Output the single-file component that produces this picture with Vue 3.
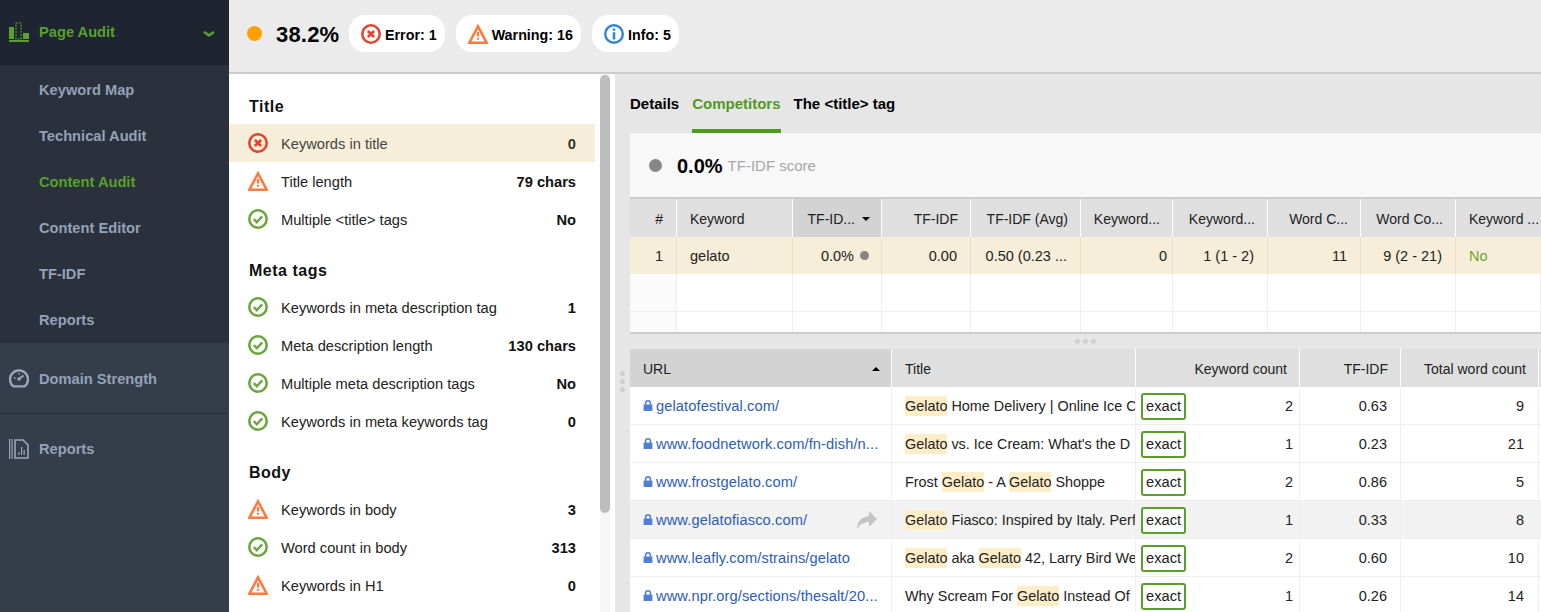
<script setup>
const navSub = [
  { label: 'Keyword Map' },
  { label: 'Technical Audit' },
  { label: 'Content Audit', active: true },
  { label: 'Content Editor' },
  { label: 'TF-IDF' },
  { label: 'Reports' },
]

const sections = [
  {
    title: 'Title',
    rows: [
      { icon: 'err', label: 'Keywords in title', value: '0', selected: true },
      { icon: 'warn', label: 'Title length', value: '79 chars' },
      { icon: 'ok', label: 'Multiple <title> tags', value: 'No' },
    ],
  },
  {
    title: 'Meta tags',
    rows: [
      { icon: 'ok', label: 'Keywords in meta description tag', value: '1' },
      { icon: 'ok', label: 'Meta description length', value: '130 chars' },
      { icon: 'ok', label: 'Multiple meta description tags', value: 'No' },
      { icon: 'ok', label: 'Keywords in meta keywords tag', value: '0' },
    ],
  },
  {
    title: 'Body',
    rows: [
      { icon: 'warn', label: 'Keywords in body', value: '3' },
      { icon: 'ok', label: 'Word count in body', value: '313' },
      { icon: 'warn', label: 'Keywords in H1', value: '0' },
    ],
  },
]

const pages = [
  { url: 'gelatofestival.com/', parts: [['Gelato', 1], [' Home Delivery | Online Ice C', 0]], count: 2, tf: '0.63', total: 9 },
  { url: 'www.foodnetwork.com/fn-dish/n...', parts: [['Gelato', 1], [" vs. Ice Cream: What's the D", 0]], count: 1, tf: '0.23', total: 21 },
  { url: 'www.frostgelato.com/', parts: [['Frost ', 0], ['Gelato', 1], [' - A ', 0], ['Gelato', 1], [' Shoppe', 0]], count: 2, tf: '0.86', total: 5 },
  { url: 'www.gelatofiasco.com/', parts: [['Gelato', 1], [' Fiasco: Inspired by Italy. Perf', 0]], count: 1, tf: '0.33', total: 8, hover: true },
  { url: 'www.leafly.com/strains/gelato', parts: [['Gelato', 1], [' aka ', 0], ['Gelato', 1], [' 42, Larry Bird We', 0]], count: 2, tf: '0.60', total: 10 },
  { url: 'www.npr.org/sections/thesalt/20...', parts: [['Why Scream For ', 0], ['Gelato', 1], [' Instead Of', 0]], count: 1, tf: '0.26', total: 14 },
]
</script>

<template>
  <div class="app">
    <svg class="defs" width="0" height="0" aria-hidden="true">
      <symbol id="i-err" viewBox="0 0 20 20">
        <circle cx="10" cy="10" r="8.7" fill="none" stroke="#e2452f" stroke-width="2.6" />
        <path d="M6.9 6.9l6.2 6.2M13.1 6.9l-6.2 6.2" fill="none" stroke="#e2452f" stroke-width="2.8" />
      </symbol>
      <symbol id="i-warn" viewBox="0 0 20 20">
        <path d="M10 2.4L18.6 18.7H1.4Z" fill="none" stroke="#ff7a3d" stroke-width="2.6" />
        <path d="M10 8v4.6M10 13.8v2" fill="none" stroke="#ff7a3d" stroke-width="2.2" />
      </symbol>
      <symbol id="i-ok" viewBox="0 0 20 20">
        <circle cx="10" cy="10" r="8.7" fill="none" stroke="#6ca63f" stroke-width="2.6" />
        <path d="M5.8 10.2l3 3 5.4-5.8" fill="none" stroke="#6ca63f" stroke-width="2.4" />
      </symbol>
      <symbol id="i-info" viewBox="0 0 20 20">
        <circle cx="10" cy="10" r="8.8" fill="none" stroke="#2f86d8" stroke-width="2.4" />
        <path d="M10 4.4v2.4M10 8.2v7.2" fill="none" stroke="#2f86d8" stroke-width="2.6" />
      </symbol>
      <symbol id="i-lock" viewBox="0 0 10 11">
        <path d="M0.6 4.6h8.8v6.4H0.6z" fill="#4f7fd0" />
        <path d="M2.6 5V3.2a2.4 2.4 0 0 1 4.8 0V5" fill="none" stroke="#4f7fd0" stroke-width="1.5" />
      </symbol>
    </svg>

    <aside class="side">
      <div class="side-head">
        <svg class="side-icon" viewBox="0 0 20 20">
          <path d="M0 5h5v12H0zM14 11h6v6h-6z" fill="#5aa02c" />
          <path d="M7 1h5v16H7z" fill="none" stroke="#5aa02c" stroke-width="1.2" stroke-dasharray="2 1.2" />
          <path d="M0 18h20v2H0z" fill="#5aa02c" />
        </svg>
        <span class="side-head-label">Page Audit</span>
        <svg class="chev" viewBox="0 0 12 6">
          <path d="M1 1l5 3.4L11 1" fill="none" stroke="#5aa02c" stroke-width="2.6" />
        </svg>
      </div>
      <nav class="side-sub">
        <a v-for="item in navSub" :key="item.label" class="sub-item" :class="{ active: item.active }">{{ item.label }}</a>
      </nav>
      <div class="side-main">
        <svg class="side-icon" viewBox="0 0 20 20">
          <path d="M4.4 18.4a9 9 0 1 1 11.2 0z" fill="none" stroke="#98a8bd" stroke-width="2.4" stroke-linejoin="round" />
          <path d="M10 11l4.4-3.6" stroke="#98a8bd" stroke-width="2" />
          <circle cx="10" cy="11" r="1.8" fill="#98a8bd" />
          <path d="M5 10h1.6M10 5v1.6" stroke="#98a8bd" stroke-width="1.4" />
        </svg>
        <span class="side-main-label">Domain Strength</span>
      </div>
      <div class="side-main no-line">
        <svg class="side-icon" viewBox="0 0 20 20">
          <path d="M0.6 0v20" stroke="#98a8bd" stroke-width="1.2" />
          <path d="M3 0v20" stroke="#98a8bd" stroke-width="1.2" />
          <path d="M6 1h8l5 5v13H6z" fill="none" stroke="#98a8bd" stroke-width="1.6" />
          <path d="M10 16v-3M12.6 16V8M15.2 16v-5" stroke="#98a8bd" stroke-width="1.2" />
        </svg>
        <span>Reports</span>
      </div>
    </aside>

    <div class="main">
      <header class="top">
        <span class="top-dot"></span>
        <span class="top-score">38.2%</span>
        <div class="pill">
          <svg class="pill-icon"><use href="#i-err" /></svg><span class="pill-text">Error: 1</span>
        </div>
        <div class="pill">
          <svg class="pill-icon"><use href="#i-warn" /></svg><span class="pill-text">Warning: 16</span>
        </div>
        <div class="pill">
          <svg class="pill-icon"><use href="#i-info" /></svg><span class="pill-text">Info: 5</span>
        </div>
      </header>

      <div class="body">
        <section class="audit">
          <div class="audit-list">
            <div v-for="section in sections" :key="section.title" class="audit-section">
              <h3 class="audit-title">{{ section.title }}</h3>
              <div
                v-for="row in section.rows"
                :key="row.label"
                class="audit-row"
                :class="{ selected: row.selected }"
              >
                <svg class="audit-icon"><use :href="'#i-' + row.icon" /></svg>
                <span class="audit-label">{{ row.label }}</span>
                <span class="audit-value">{{ row.value }}</span>
              </div>
            </div>
          </div>
          <div class="scroll"><div class="scroll-thumb"></div></div>
        </section>

        <section class="detail">
          <div class="handle-v"><i></i><i></i><i></i></div>
          <nav class="tabs">
            <a class="tab">Details</a>
            <a class="tab on">Competitors</a>
            <a class="tab">The &lt;title&gt; tag</a>
          </nav>
          <div class="score">
            <span class="score-dot"></span>
            <span class="score-val">0.0%</span>
            <span class="score-label">TF-IDF score</span>
          </div>

          <div class="kw-table">
            <div class="c h r c-num">#</div>
            <div class="c h">Keyword</div>
            <div class="c h r sorted">TF-ID... <span class="caret down"></span></div>
            <div class="c h r">TF-IDF</div>
            <div class="c h r">TF-IDF (Avg)</div>
            <div class="c h r">Keyword...</div>
            <div class="c h r">Keyword...</div>
            <div class="c h r">Word C...</div>
            <div class="c h r">Word Co...</div>
            <div class="c h last">Keyword ...</div>

            <div class="c y r c-num">1</div>
            <div class="c y">gelato</div>
            <div class="c y r">0.0% <span class="mini-dot"></span></div>
            <div class="c y r">0.00</div>
            <div class="c y r">0.50 (0.23 ...</div>
            <div class="c y r tight">0</div>
            <div class="c y r">1 (1 - 2)</div>
            <div class="c y r">11</div>
            <div class="c y r">9 (2 - 21)</div>
            <div class="c y last green">No</div>

            <template v-for="n in 2" :key="n">
              <div v-for="m in 10" :key="m" class="c e" :class="{ tall: n === 1, short: n === 2, faint: m === 1 }"></div>
            </template>
          </div>

          <div class="handle-h"><i></i><i></i><i></i></div>

          <div class="url-table">
            <div class="c h sorted url-h">URL <span class="caret up"></span></div>
            <div class="c h">Title</div>
            <div class="c h r">Keyword count</div>
            <div class="c h r">TF-IDF</div>
            <div class="c h r">Total word count</div>
            <div class="c h filler"></div>

            <div v-for="p in pages" :key="p.url" class="url-row" :class="{ hover: p.hover }">
              <div class="c b url-c">
                <svg class="lock"><use href="#i-lock" /></svg>
                <a class="link">{{ p.url }}</a>
                <svg v-if="p.hover" class="share" viewBox="0 0 20 20">
                  <path d="M12 1l8 8-8 8v-5C7 12 3 14 0 19c0-7 4-12 12-13z" fill="#c4c4c4" />
                </svg>
              </div>
              <div class="c b title-c">
                <template v-for="(t, i) in p.parts" :key="i">
                  <mark v-if="t[1]" class="hl">{{ t[0] }}</mark>
                  <span v-else>{{ t[0] }}</span>
                </template>
              </div>
              <div class="c b r count-c">
                <span class="exact">exact</span>
                <span>{{ p.count }}</span>
              </div>
              <div class="c b r tf-c">{{ p.tf }}</div>
              <div class="c b r total-c">{{ p.total }}</div>
              <div class="c b filler"></div>
            </div>
          </div>
        </section>
      </div>
    </div>
  </div>
</template>

<style>
html, body { margin: 0; overflow: hidden; }
</style>

<style scoped>
.app {
  display: flex;
  width: 1541px;
  height: 612px;
  overflow: hidden;
  font: 14.67px/20px "Liberation Sans", Arial, sans-serif;
  color: #222;
  background: #fff;
}
.defs { position: absolute; }

/* sidebar */
.side {
  flex: 0 0 229px;
  background: #363d4a;
  font-weight: 700;
  color: #93a2b8;
}
.side-head {
  display: flex;
  align-items: center;
  height: 65px;
  padding: 0 14px 0 9px;
  box-sizing: border-box;
  background: #1e2430;
  border-bottom: 1px solid #1a1f29;
  color: #5aa02c;
}
.side-icon { width: 20px; height: 20px; margin-right: 10px; flex: none; }
.side-head-label { flex: 1; }
.chev { width: 12px; height: 6px; margin-top: 4px; }
.side-sub { background: #2a303c; height: 278px; padding-top: 1px; box-sizing: border-box; }
.sub-item { display: block; height: 46px; line-height: 48px; padding-left: 39px; }
.sub-item.active { color: #5aa02c; }
.side-main {
  display: flex;
  align-items: center;
  height: 71px;
  box-sizing: border-box;
  padding-left: 9px;
  border-bottom: 1px solid #2a303c;
}
.side-main-label { padding-top: 2px; }
.no-line { border-bottom: 0; padding-bottom: 2px; }

/* top bar */
.main { flex: 1; min-width: 0; display: flex; flex-direction: column; }
.top {
  flex: 0 0 74px;
  display: flex;
  align-items: center;
  padding: 0 0 5px 18px;
  box-sizing: border-box;
  background: #ebebeb;
  border-bottom: 2px solid #ccc;
  color: #000;
  font-weight: 700;
}
.top-dot { width: 15px; height: 15px; border-radius: 50%; background: #ff9f00; margin-right: 14px; }
.top-score { font-size: 22px; letter-spacing: .2px; margin-right: 10px; width: 63px; white-space: nowrap; position: relative; top: 1px; }
.pill {
  display: flex;
  align-items: center;
  height: 37px;
  margin-right: 11px;
  padding: 0 8px 0 12px;
  background: #fff;
  border-radius: 16px;
  white-space: nowrap;
  font-size: 14.3px;
}
.pill-icon { width: 20px; height: 20px; margin-right: 4px; }
.pill-text { padding-top: 3px; }

.body { flex: 1; min-height: 0; display: flex; }

/* audit list */
.audit { flex: 0 0 386px; display: flex; background: #fff; }
.audit-list { width: 366px; padding-top: 14px; }
.audit-section { margin-bottom: 14px; }
.audit-title {
  margin: 0;
  height: 36px;
  line-height: 38px;
  padding-left: 20px;
  font-size: 16px;
  font-weight: 700;
  letter-spacing: .5px;
  color: #111;
}
.audit-row {
  display: flex;
  align-items: center;
  height: 38px;
  padding: 0 19px;
}
.audit-row.selected { background: #f6eed8; color: #444; }
.audit-icon { width: 20px; height: 20px; margin-right: 13px; flex: none; }
.audit-label { flex: 1; padding-top: 2px; }
.audit-value { font-weight: 700; color: #111; padding-top: 2px; }
.audit-row.selected .audit-value { color: #333; }
.scroll { width: 10px; margin: 0 5px; background: #f6f6f6; }
.scroll-thumb { height: 438px; margin-top: 1px; background: #bdbdbd; border-radius: 5px; }

/* detail */
.detail { position: relative; flex: 1; min-width: 0; background: #e6e6e6; padding-left: 15px; }
.handle-v { position: absolute; left: 5px; top: 297px; display: grid; gap: 3px; }
.handle-v i, .handle-h i { display: block; width: 5px; height: 5px; border-radius: 50%; background: #cfcfcf; }
.tabs { display: flex; height: 59px; font-weight: 700; font-size: 15px; color: #000; }
.tab { padding-top: 20px; margin-right: 13px; box-sizing: border-box; }
.tab.on { color: #4f9a1d; border-bottom: 4px solid #4f9a1d; }
.score {
  display: flex;
  align-items: center;
  height: 66px;
  box-sizing: border-box;
  padding: 0 0 0 19px;
  background: #f8f8f8;
  border-bottom: 2px solid #ccc;
}
.score-dot { width: 13px; height: 13px; border-radius: 50%; background: #868686; margin-right: 15px; }
.score-val { font-size: 20px; font-weight: 700; color: #000; margin-right: 5px; padding-top: 2px; }
.score-label { color: #a6a6a6; font-size: 15px; padding-top: 2px; }

/* grids */
.kw-table {
  display: grid;
  grid-template-columns: 47px 116px 89px 89px 110px 92px 95px 93px 95px 85px;
  grid-template-rows: 38px 37px 38px 20px;
  background: #fff;
  border-bottom: 2px solid #ccc;
  font-size: 14.5px;
}
.c {
  box-sizing: border-box;
  padding: 0 13px;
  white-space: nowrap;
  overflow: hidden;
  display: flex;
  align-items: center;
  min-width: 0;
}
.r { justify-content: flex-end; }
.h { background: #dfdfdf; border-right: 1px solid #fff; font-size: 14px; padding-top: 2px; padding-right: 12px; }
.h.sorted { background: #d3d3d3; }
.h.c-num { padding-right: 13px; }
.last { border-right: 0; }
.y { background: #f6eed8; border-right: 1px solid #eadfbd; }
.y.last { border-right: 0; }
.tight { padding-right: 5px; }
.green { color: #6aa52e; }
.e { border-right: 1px solid #eee; }
.tall { border-bottom: 1px solid #eee; }
.faint { background: #fbfbfb; }
.mini-dot { width: 9px; height: 9px; border-radius: 50%; background: #868686; margin-left: 6px; margin-right: -1px; }
.caret { width: 0; height: 0; border-left: 4px solid transparent; border-right: 4px solid transparent; margin-left: 7px; margin-right: -1px; }
.caret.down { border-top: 4px solid #000; }
.caret.up { border-bottom: 4px solid #000; }

.handle-h { display: flex; justify-content: center; gap: 3px; align-items: center; height: 15px; width: 911px; }
.handle-h i { width: 5px; height: 5px; background: #d2d2d2; }

.url-table {
  display: grid;
  grid-template-columns: 262px 244px 164px 101px 138px 2px;
  background: #fff;
  font-size: 14.5px;
}
.url-table > .h { height: 38px; }
.url-h { justify-content: space-between; }
.url-row { display: contents; }
.b { height: 38px; padding-top: 1px; background: #fff; border-right: 1px solid #f0f0f0; border-bottom: 1px solid #eee; }
.hover .b { background: #f2f2f2; }
.filler { padding: 0; border-right: 0; }
.lock { width: 10px; height: 11px; margin-right: 3px; margin-bottom: 1px; flex: none; }
.link { color: #2d5db4; flex: 1; overflow: hidden; font-size: 14.67px; letter-spacing: .1px; }
.url-c { position: relative; padding-right: 0; }
.share { position: absolute; right: 14px; top: 9px; width: 20px; height: 20px; }
.title-c { padding-right: 0; display: block; line-height: 36px; font-size: 14.4px; }
.hl { background: #fdeec8; color: inherit; padding: 0; display: inline-block; height: 20px; line-height: 20px; }
.count-c { padding: 1px 6px 0 5px; justify-content: space-between; }
.exact {
  box-sizing: border-box;
  height: 27px;
  line-height: 23px;
  margin-top: 1px;
  padding: 0 3px;
  border: 2px solid #5a9f2c;
  border-radius: 3px;
  color: #222;
  background: #fff;
  font-size: 14.67px;
}
.tf-c { padding-right: 13px; }
.total-c { padding-right: 14px; }
</style>
